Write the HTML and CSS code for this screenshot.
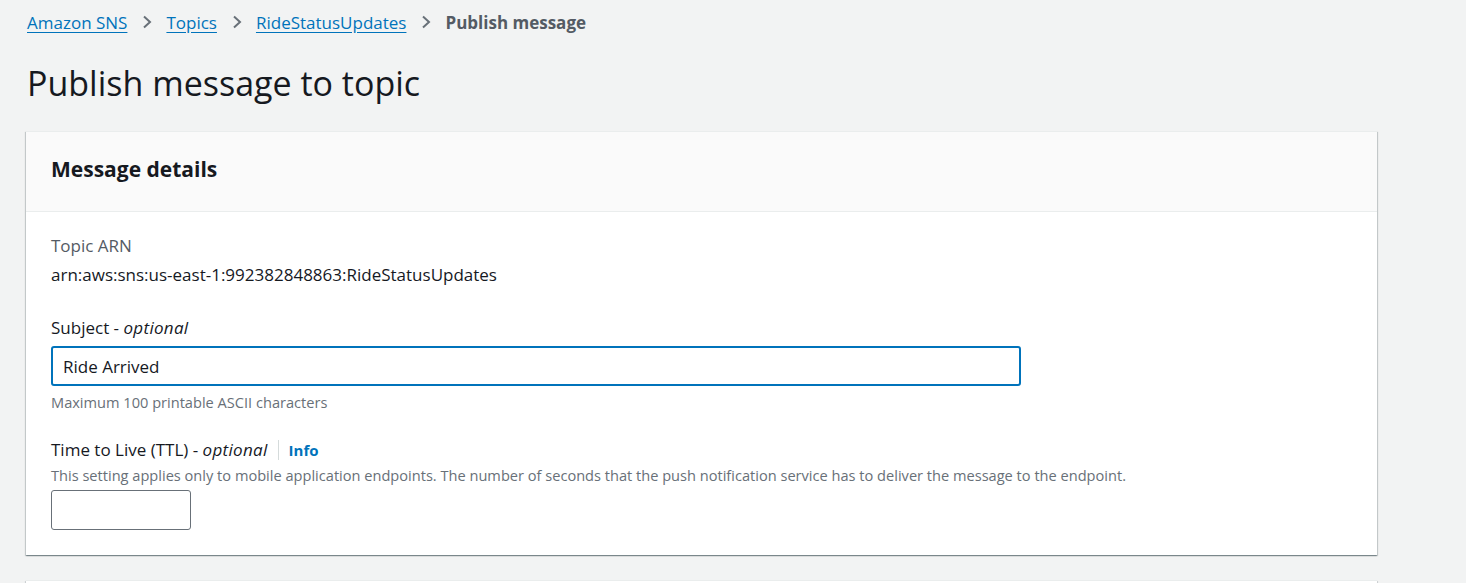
FILE: index.html
```html
<!DOCTYPE html>
<html lang="en">

<head>
    <meta charset="UTF-8">
    <title>Publish message to topic</title>
    <link rel="stylesheet" href="styles.css">
</head>

<body>
    <div class="page">
        <nav class="breadcrumbs">
            <a href="#">Amazon SNS</a>
            <span class="chevron"><svg width="12" height="14" viewBox="0 0 12 14"><path d="M3 1.5l6 5.5-6 5.5" fill="none" stroke="#687078" stroke-width="2"/></svg></span>
            <a href="#">Topics</a>
            <span class="chevron"><svg width="12" height="14" viewBox="0 0 12 14"><path d="M3 1.5l6 5.5-6 5.5" fill="none" stroke="#687078" stroke-width="2"/></svg></span>
            <a href="#">RideStatusUpdates</a>
            <span class="chevron"><svg width="12" height="14" viewBox="0 0 12 14"><path d="M3 1.5l6 5.5-6 5.5" fill="none" stroke="#687078" stroke-width="2"/></svg></span>
            <span class="current">Publish message</span>
        </nav>

        <h1>Publish message to topic</h1>

        <div class="card">
            <div class="card-header">
                <h2>Message details</h2>
            </div>
            <div class="card-body">
                <div class="field field-arn">
                    <div class="key">Topic ARN</div>
                    <div class="value">arn:aws:sns:us-east-1:992382848863:RideStatusUpdates</div>
                </div>

                <div class="field">
                    <label class="label" for="subject">Subject - <i>optional</i></label>
                    <input id="subject" class="input input-wide focused" type="text" value="Ride Arrived">
                    <div class="hint">Maximum 100 printable ASCII characters</div>
                </div>

                <div class="field">
                    <div class="label-row">
                        <label class="label" for="ttl">Time to Live (TTL) - <i>optional</i></label>
                        <span class="divider"></span>
                        <a class="info" href="#">Info</a>
                    </div>
                    <div class="desc">This setting applies only to mobile application endpoints. The number of seconds that the push notification service has to deliver the message to the endpoint.</div>
                    <input id="ttl" class="input input-small" type="text">
                </div>
            </div>
        </div>

        <div class="card card-next"></div>
    </div>
</body>

</html>
```

FILE: styles.css
```css
body {
    margin: 0;
    background-color: #f2f3f3;
    font-family: "Open Sans", "Noto Sans", sans-serif;
    color: #16191f;
    overflow: hidden;
}

.page {
    padding: 10px 89px 0 26px;
}

.breadcrumbs {
    display: flex;
    align-items: center;
    height: 24px;
    padding-left: 1px;
    font-size: 17px;
}

.breadcrumbs a {
    color: #0073bb;
    text-decoration: underline;
    text-underline-offset: 3px;
}

.chevron {
    display: flex;
    align-items: center;
    padding: 0 13px 0 14px;
}

.current {
    color: #545b64;
    font-weight: bold;
}

h1 {
    margin: 0;
    padding: 29px 0 28px 1px;
    font-size: 34px;
    font-weight: normal;
    line-height: 40px;
    color: #16191f;
}

.card {
    background: white;
    box-shadow: 0 1px 1px 0 rgba(0, 28, 36, 0.3), 1px 1px 1px 0 rgba(0, 28, 36, 0.15), -1px 1px 1px 0 rgba(0, 28, 36, 0.15);
    border-top: 1px solid #eaeded;
}

.card-header {
    box-sizing: border-box;
    background-color: #fafafa;
    border-bottom: 1px solid #eaeded;
    height: 80px;
    display: flex;
    align-items: center;
    padding: 0 0 5px 25px;
}

.card-header h2 {
    margin: 0;
    font-size: 21px;
    font-weight: bold;
}

.card-body {
    padding: 22px 25px 25px;
}

.field {
    margin-bottom: 27px;
}

.field-arn {
    margin-bottom: 29px;
}

.field:last-child {
    margin-bottom: 0;
}

.key {
    color: #545b64;
    font-size: 17px;
    line-height: 24px;
    margin-bottom: 5px;
}

.value {
    font-size: 17px;
    line-height: 24px;
}

.label {
    display: block;
    font-size: 17px;
    line-height: 24px;
    margin-bottom: 6px;
}

.label i {
    letter-spacing: 0.3px;
}

.label-row {
    display: flex;
    align-items: center;
}

.label-row .label {
    margin-bottom: 0;
}

.divider {
    width: 1px;
    height: 20px;
    background-color: #d5dbdb;
    margin: 0 10px;
}

.info {
    color: #0073bb;
    font-weight: bold;
    font-size: 15px;
    text-decoration: none;
}

.input {
    display: block;
    box-sizing: border-box;
    height: 40px;
    font-family: inherit;
    font-size: 17px;
    color: #16191f;
    background: white;
    border: 1px solid #687078;
    border-radius: 3px;
    padding: 0 10px;
}

.input-wide {
    width: 970px;
}

.input.focused {
    border: 2px solid #0073bb;
    padding: 0 10px;
}

.input-small {
    width: 140px;
}

.hint {
    color: #687078;
    font-size: 14.6px;
    line-height: 18px;
    margin-top: 7px;
}

.desc {
    color: #687078;
    font-size: 14.6px;
    line-height: 20px;
    margin: 3px 0 5px;
}

.card-next {
    margin-top: 25px;
    height: 3px;
}
```
